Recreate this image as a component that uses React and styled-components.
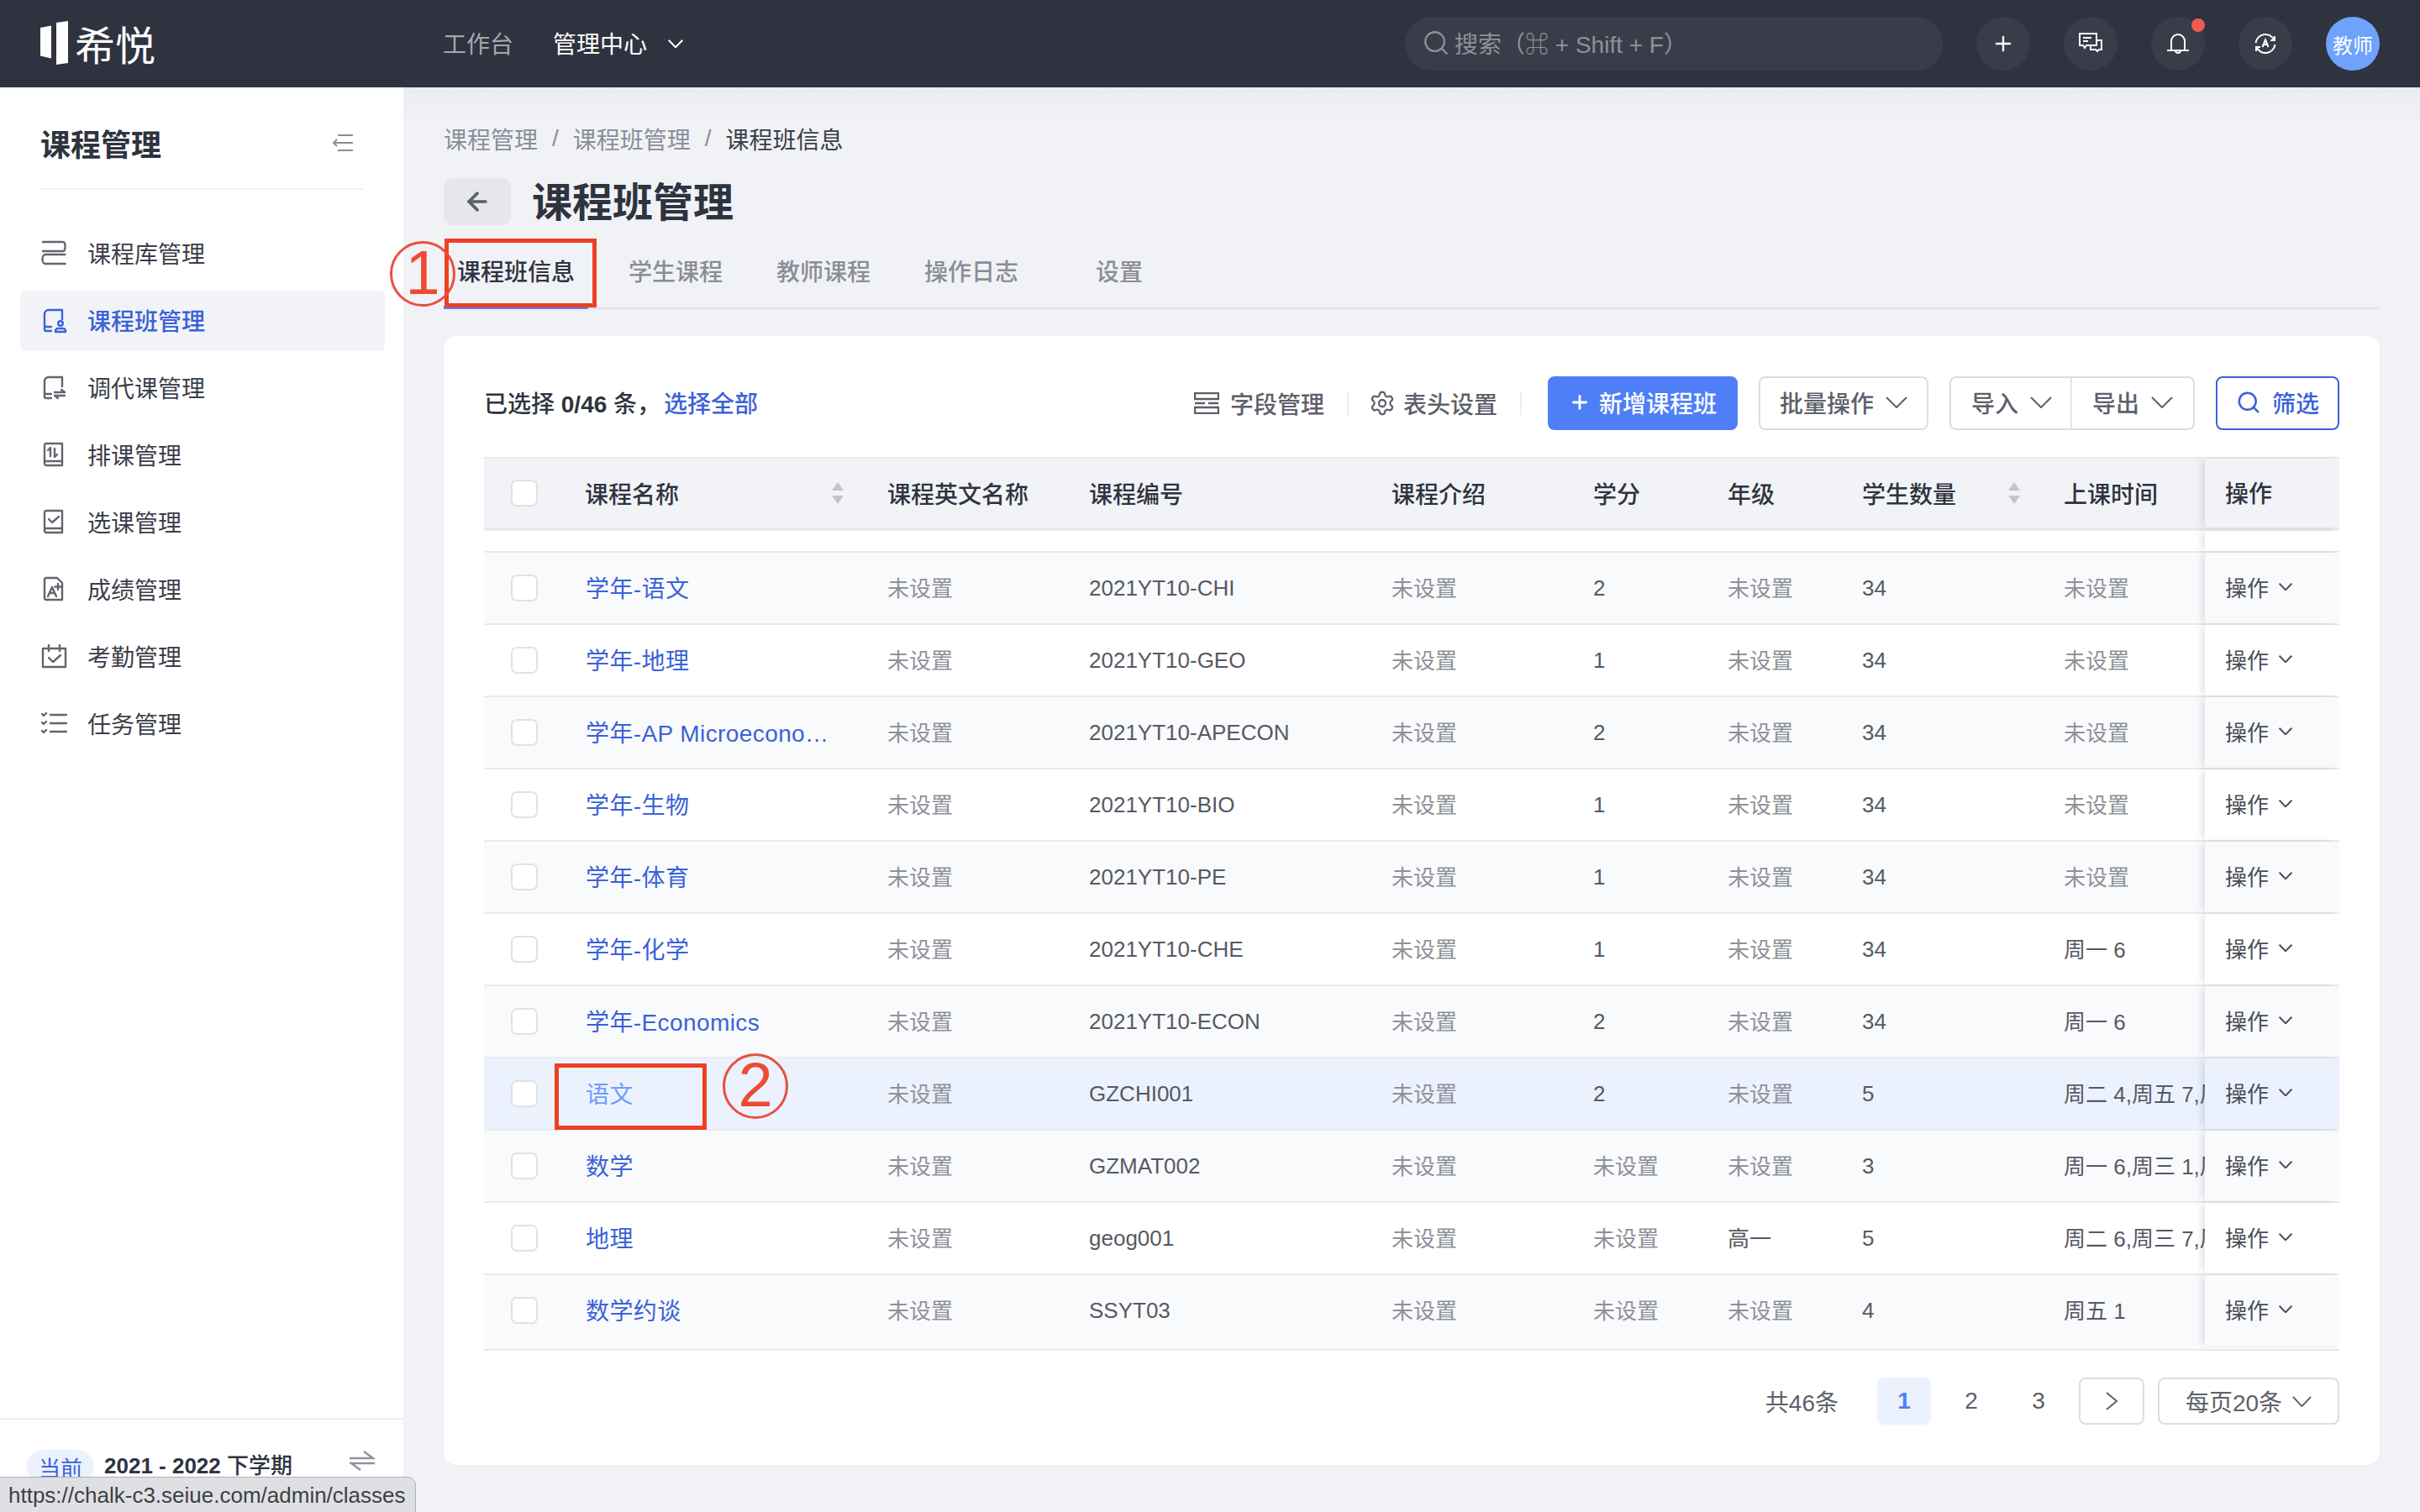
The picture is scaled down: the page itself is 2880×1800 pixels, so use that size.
import styled, { createGlobalStyle } from "styled-components"
import { ArrowLeft, Plus, Search, Settings } from "lucide-react"

const GlobalStyle = createGlobalStyle`
    html, body {
        margin: 0;
        padding: 0;
        background: #f0f2f6;
    }
    * { box-sizing: border-box; }
    body {
        font-family: "Liberation Sans", "Noto Sans CJK SC", sans-serif;
        color: #2f3340;
    }
`

const Page = styled.div`
    position: relative;
    width: 2880px;
    height: 1800px;
    overflow: hidden;
    display: flex;
    flex-direction: column;
`
const TopBar = styled.header`
    height: 104px;
    flex: none;
    background: #2f333f;
    display: flex;
    align-items: center;
    padding: 0 48px;
`
const Logo = styled.div`
    display: flex;
    align-items: center;
    gap: 8px;
    width: 479px;
    color: #fff;
    font-size: 48px;
    font-weight: 400;
    padding-bottom: 2px;
`
const TopNav = styled.a`
    font-size: 28px;
    padding-bottom: 2px;
    color: ${(props) => (props.$active ? "#fff" : "#a6a8af")};
    margin-right: ${(props) => (props.$active ? "25px" : "47px")};
`
const TopCaret = styled.span`
    color: #fff;
    display: flex;
`
const TopRight = styled.div`
    margin-left: auto;
    display: flex;
    align-items: center;
    gap: 40px;
`
const SearchBox = styled.div`
    width: 640px;
    height: 64px;
    border-radius: 32px;
    background: #3a3d49;
    display: flex;
    align-items: center;
    gap: 5px;
    padding: 0 0 2px 20px;
    color: #8f9199;
    font-size: 28px;
`
const RoundButton = styled.div`
    position: relative;
    width: 64px;
    height: 64px;
    border-radius: 50%;
    background: #3a3d49;
    color: #fff;
    display: flex;
    align-items: center;
    justify-content: center;
`
const RedDot = styled.span`
    position: absolute;
    top: 2px;
    right: 0;
    width: 16px;
    height: 16px;
    border-radius: 50%;
    background: #ef5a55;
`
const Avatar = styled.div`
    width: 64px;
    height: 64px;
    border-radius: 50%;
    background: #6ea2fb;
    color: #fff;
    font-size: 24px;
    display: flex;
    align-items: center;
    justify-content: center;
`
const Body = styled.div`
    flex: 1;
    display: flex;
    min-height: 0;
`
const Sidebar = styled.aside`
    width: 480px;
    flex: none;
    background: #fff;
    display: flex;
    flex-direction: column;
`
const SideHead = styled.div`
    margin: 0 48px;
    height: 122px;
    border-bottom: 2px solid #f0f1f3;
    display: flex;
    align-items: center;
    justify-content: space-between;
    padding: 12px 12px 0 0;
    font-size: 36px;
    font-weight: 700;
    color: #2f3340;
`
const Menu = styled.nav`
    margin-top: 40px;
    padding: 0 22px 0 24px;
    display: flex;
    flex-direction: column;
    gap: 8px;
`
const MenuItem = styled.a`
    height: 72px;
    display: flex;
    align-items: center;
    gap: 24px;
    padding: 0 0 2px 24px;
    border-radius: 6px;
    font-size: 28px;
    color: ${(props) => (props.$active ? "#3a62d8" : "#3b3e49")};
    background: ${(props) => (props.$active ? "#f2f3f7" : "transparent")};
    font-weight: ${(props) => (props.$active ? 500 : 400)};
    svg { color: ${(props) => (props.$active ? "#3a62d8" : "#63656e")}; }
`
const SideFoot = styled.div`
    margin-top: auto;
    height: 112px;
    border-top: 2px solid #eeeff1;
    display: flex;
    align-items: flex-start;
    padding: 36px 32px 0;
    font-size: 26px;
    font-weight: 500;
    color: #2f3340;
`
const TermTag = styled.span`
    width: 80px;
    height: 40px;
    border-radius: 20px;
    background: #ebf1fd;
    color: #3a62d8;
    font-weight: 400;
    display: flex;
    align-items: center;
    justify-content: center;
    margin-right: 12px;
`
const TermName = styled.span`
    line-height: 38px;
    flex: 1;
`
const Num = styled.b`
    font-weight: 700;
`
const StatusBar = styled.div`
    position: absolute;
    left: -2px;
    bottom: -2px;
    width: 497px;
    height: 44px;
    background: #dfe0e3;
    border: 1px solid #aeb0b4;
    border-top-right-radius: 10px;
    font-size: 26px;
    line-height: 42px;
    padding-left: 11px;
    color: #3d3f45;
    white-space: nowrap;
`
const Main = styled.main`
    flex: 1;
    min-width: 0;
    padding: 41px 48px 0;
    background: linear-gradient(#eaebef, #f0f2f6 40px);
`
const Crumbs = styled.div`
    display: flex;
    align-items: center;
    height: 40px;
    font-size: 28px;
    color: #8a8d97;
`
const CrumbSep = styled.span`
    margin: 0 17px;
`
const CrumbNow = styled.span`
    color: #3b3e49;
`
const TitleRow = styled.div`
    margin-top: 27px;
    display: flex;
    align-items: center;
    gap: 25px;
    height: 56px;
`
const BackButton = styled.div`
    width: 80px;
    height: 56px;
    border-radius: 10px;
    background: #e6e7eb;
    color: #5c5f6a;
    display: flex;
    align-items: center;
    justify-content: center;
`
const PageTitle = styled.h1`
    margin: 0 0 6px;
    font-size: 48px;
    font-weight: 700;
    color: #2f3340;
`
const Tabs = styled.div`
    margin-top: 16px;
    height: 84px;
    border-bottom: 2px solid #e1e3e8;
    display: flex;
    gap: 32px;
`
const Tab = styled.a`
    height: 84px;
    padding: 0 16px;
    margin-left: ${(props) => (props.$far ? "28px" : "0")};
    font-size: 28px;
    line-height: 81px;
    color: ${(props) => (props.$active ? "#2f3340" : "#8a8d97")};
    font-weight: 500;
    border-bottom: ${(props) => (props.$active ? "4px solid #4f7ff6" : "none")};
`
const Card = styled.section`
    margin-top: 32px;
    height: 1344px;
    background: #fff;
    border-radius: 16px;
    padding: 48px 48px 0;
`
const Toolbar = styled.div`
    height: 64px;
    display: flex;
    align-items: center;
    font-size: 28px;
    font-weight: 500;
`
const SelectInfo = styled.div`
    flex: 1;
    padding-bottom: 2px;
    color: #2f3340;
`
const SelectAll = styled.a`
    margin-left: 4px;
    color: #3a62d8;
`
const ToolLink = styled.a`
    display: flex;
    align-items: center;
    gap: 13px;
    color: #5e6069;
    padding: 0 27px;
    height: 28px;
    border-right: 2px solid #eceded;
    &:first-of-type { padding-left: 0; }
`
const GearIcon = styled(Settings)`
    margin: 0 -4px 0 -3px;
`
const Btn = styled.button`
    height: 64px;
    padding: 0 23px 2px;
    margin-left: ${(props) => (props.$gap ? `${props.$gap}px` : "25px")};
    display: flex;
    align-items: center;
    gap: 14px;
    border-radius: 8px;
    font: inherit;
    background: #fff;
    color: #5e6069;
    border: 2px solid #dcdde0;
`
const PrimaryBtn = styled(Btn)`
    background: #4f7ff6;
    border-color: #4f7ff6;
    color: #fff;
    gap: 10px;
`
const FilterBtn = styled(Btn)`
    padding: 0 22px 2px;
    border-color: #3a62d8;
    color: #3a62d8;
    gap: 13px;
`
const BtnGroup = styled.div`
    display: flex;
    margin-left: 25px;
    ${Btn} {
        margin-left: 0;
        border-radius: 0;
        padding: 0 24px 2px;
    }
    ${Btn}:first-child {
        border-radius: 8px 0 0 8px;
        border-right: none;
        box-shadow: inset -2px 0 0 #e4e5e7;
    }
    ${Btn}:last-child {
        border-radius: 0 8px 8px 0;
        border-left: none;
    }
`
const Table = styled.div`
    margin-top: 32px;
`
const Row = styled.div`
    display: flex;
    height: ${(props) => props.$height || 86}px;
    padding-bottom: ${(props) => (props.$last ? "4px" : "0")};
    border-bottom: 2px solid #e9eaec;
    background: ${(props) => props.$bg || "#fff"};
`
const HeadRow = styled(Row)`
    height: 88px;
    border-top: 2px solid #e9eaec;
    border-bottom: 4px solid #e9eaec;
    background: #f2f3f7;
    font-size: 28px;
    font-weight: 500;
    color: #2f3340;
`
const Cell = styled.div`
    width: ${(props) => props.$w}px;
    flex: none;
    display: flex;
    align-items: center;
    justify-content: ${(props) => (props.$sort ? "space-between" : "flex-start")};
    padding: ${(props) => (props.$sort ? "0 28px 0 24px" : "0 0 0 24px")};
    padding-bottom: ${(props) => (props.$lift ? "3px" : "0")};
    overflow: hidden;
    white-space: nowrap;
    font-size: 26px;
    color: ${(props) => (props.$muted ? "#8e9199" : "#565963")};
    ${HeadRow} & {
        font-size: 28px;
        color: #2f3340;
    }
`
const CheckCell = styled(Cell)`
    padding-left: 32px;
`
const CheckBox = styled.span`
    width: 32px;
    height: 32px;
    border: 2px solid #e1e2e5;
    border-radius: 7px;
    background: #fff;
`
const CourseLink = styled.a`
    font-size: 28px;
    margin: 0 0 3px 1px;
    letter-spacing: 0.4px;
    color: ${(props) => (props.$hover ? "#6f9cff" : "#3a62d8")};
`
const OpsCell = styled(Cell)`
    position: relative;
    gap: 12px;
    padding-bottom: 3px;
    background: inherit;
    box-shadow: -6px 0 8px -2px rgba(30, 35, 50, 0.12);
    color: #4a4d57;
`
const Pager = styled.div`
    margin-top: 32px;
    display: flex;
    align-items: center;
    justify-content: flex-end;
    gap: 16px;
    font-size: 28px;
    color: #5e6069;
`
const PagerTotal = styled.span`
    margin-right: 30px;
`
const PageNum = styled.span`
    width: 64px;
    height: 56px;
    border-radius: 8px;
    display: flex;
    align-items: center;
    justify-content: center;
    background: ${(props) => (props.$on ? "#ebf2fe" : "transparent")};
    color: ${(props) => (props.$on ? "#4f7ff6" : "#5e6069")};
    font-weight: ${(props) => (props.$on ? 700 : 400)};
`
const PagerBox = styled.span`
    height: 56px;
    width: ${(props) => props.$w}px;
    border: 2px solid #dcdde0;
    border-radius: 8px;
    display: flex;
    align-items: center;
    justify-content: center;
    gap: 12px;
`
const MarkBox = styled.div`
    position: absolute;
    left: ${(props) => props.$x}px;
    top: ${(props) => props.$y}px;
    width: ${(props) => props.$w}px;
    height: ${(props) => props.$h}px;
    border: 5px solid #ee3f24;
`
const MarkCircle = styled.div`
    position: absolute;
    left: ${(props) => props.$x}px;
    top: ${(props) => props.$y}px;
    width: 78px;
    height: 78px;
    border: 3px solid #e8503f;
    border-radius: 50%;
    color: #ee4a33;
    font-size: 74px;
    line-height: 70px;
    text-align: center;
`

const Caret = ({ w = 26, h = 14, sw = 2 }) => (
    <svg width={w} height={h} viewBox="0 0 26 14" preserveAspectRatio="none" fill="none" stroke="currentColor" strokeWidth={sw}>
        <path d="M1 1l12 12L25 1" vectorEffect="non-scaling-stroke" />
    </svg>
)

const SortArrows = () => (
    <svg width="14" height="26" viewBox="0 0 14 26" fill="#c3c5ca">
        <path d="M7 0l7 10H0zM7 26l7-10H0z" />
    </svg>
)

const menuPaths = {
    library: <path d="M3 3h24c1.500 0 2.500 2 2.500 5.500S28.500 14 27 14H3M29.500 18H6c-2 0-3.500 2.500-3.500 5.500S4 29 6 29h23.500" />,
    classes: (
        <>
            <path d="M26 15V4H10a5 5 0 0 0-5 5v18a2 2 0 0 0 2 2h6M5 24h8" />
            <circle cx="24" cy="20" r="2.800" />
            <path d="M18 30v-1a3 3 0 0 1 3-3h6a3 3 0 0 1 3 3v1z" />
        </>
    ),
    swap: <path d="M26 15V4H10a5 5 0 0 0-5 5v18a2 2 0 0 0 2 2h6M5 24h8M17 22h12l-4-3M29 26H17l4 3" />,
    sort: <path d="M7 3h19v26H7a2 2 0 0 1-2-2V5a2 2 0 0 1 2-2zM5 24h21M12 18V8l-3 3M17 9v10l3-3" />,
    check: <path d="M7 3h19v26H7a2 2 0 0 1-2-2V5a2 2 0 0 1 2-2zM5 24h21M10 13l4 4 8-7" />,
    grade: <path d="M7 3h13l6 6v20H7a2 2 0 0 1-2-2V5a2 2 0 0 1 2-2zM9 25l5-11 5 11M11 21h6M21 10v7M17.500 13.500h7" />,
    attend: <path d="M3 7h27v22H3zM10 3v7M23 3v7M10 18l5 5 9-8" />,
    tasks: <path d="M2 5l2 2 3-3M2 15l2 2 3-3M2 25l2 2 3-3M12 6h19M12 16h19M12 26h19" />,
}

const MenuIcon = ({ name }) => (
    <svg width="32" height="32" viewBox="0 0 32 32" fill="none" stroke="currentColor" strokeWidth="2.400" strokeLinejoin="round" strokeLinecap="round">
        {menuPaths[name]}
    </svg>
)

const menus = [
    { name: "课程库管理", icon: "library" },
    { name: "课程班管理", icon: "classes", active: true },
    { name: "调代课管理", icon: "swap" },
    { name: "排课管理", icon: "sort" },
    { name: "选课管理", icon: "check" },
    { name: "成绩管理", icon: "grade" },
    { name: "考勤管理", icon: "attend" },
    { name: "任务管理", icon: "tasks" },
]

const UNSET = "未设置"
const rows = [
    ["学年-语文", "2021YT10-CHI", "2", UNSET, "34", UNSET],
    ["学年-地理", "2021YT10-GEO", "1", UNSET, "34", UNSET],
    ["学年-AP Microecono…", "2021YT10-APECON", "2", UNSET, "34", UNSET],
    ["学年-生物", "2021YT10-BIO", "1", UNSET, "34", UNSET],
    ["学年-体育", "2021YT10-PE", "1", UNSET, "34", UNSET],
    ["学年-化学", "2021YT10-CHE", "1", UNSET, "34", "周一 6"],
    ["学年-Economics", "2021YT10-ECON", "2", UNSET, "34", "周一 6"],
    ["语文", "GZCHI001", "2", UNSET, "5", "周二 4,周五 7,周六 3"],
    ["数学", "GZMAT002", UNSET, UNSET, "3", "周一 6,周三 1,周五 2"],
    ["地理", "geog001", UNSET, "高一", "5", "周二 6,周三 7,周五 1"],
    ["数学约谈", "SSYT03", UNSET, UNSET, "4", "周五 1"],
]

const widths = [96, 360, 240, 360, 240, 160, 160, 240, 192, 160]

const rowBg = (i) => {
    if (i === 7) return "#ebf2fe"
    return i % 2 === 0 ? "#f9fafc" : "#fff"
}

function App() {
    return (
        <Page>
            <GlobalStyle />
            <TopBar>
                <Logo>
                    <svg width="33" height="52" viewBox="0 0 33 52" fill="#fff">
                        <path d="M0 8l13-2.500v39L0 41.500zM19 2l14-2 0 50-14 2z" />
                    </svg>
                    希悦
                </Logo>
                <TopNav>工作台</TopNav>
                <TopNav $active>管理中心</TopNav>
                <TopCaret><Caret w={18} h={10} /></TopCaret>
                <TopRight>
                    <SearchBox>
                        <Search size={34} strokeWidth={1.6} />
                        搜索（⌘ + Shift + F）
                    </SearchBox>
                    <RoundButton><Plus size={28} strokeWidth={2} /></RoundButton>
                    <RoundButton>
                        <svg width="28" height="26" viewBox="0 0 28 26" fill="none" stroke="currentColor" strokeWidth="2">
                            <path d="M1 1h20v14H9l-2 3-2-3H1zM5 6h10M5 10h6M21 9h6v11h-3l-2 2-2-2h-6v-5" />
                        </svg>
                    </RoundButton>
                    <RoundButton>
                        <svg width="26" height="28" viewBox="0 0 26 28" fill="none" stroke="currentColor" strokeWidth="2">
                            <path d="M5 22V11a8 8 0 0 1 16 0v11M0 22h26M10 22a3 3 0 0 0 6 0" />
                        </svg>
                        <RedDot />
                    </RoundButton>
                    <RoundButton>
                        <svg width="26" height="26" viewBox="0 0 26 26" fill="none" stroke="currentColor" strokeWidth="2">
                            <path d="M1.500 12a11.500 11.500 0 0 1 22-3M24.500 14a11.500 11.500 0 0 1-22 3M24 4v5h-5M2 22v-5h5M9.500 17L13 8.500l3.500 8.500M10.700 14h4.600" />
                        </svg>
                    </RoundButton>
                    <Avatar>教师</Avatar>
                </TopRight>
            </TopBar>
            <Body>
                <Sidebar>
                    <SideHead>
                        课程管理
                        <svg width="24" height="20" viewBox="0 0 24 20" fill="none" stroke="#8a8d97" strokeWidth="2">
                            <path d="M6 1h18M1 10h23M6 19h18M5 6l-4 4 4 4" />
                        </svg>
                    </SideHead>
                    <Menu>
                        {menus.map((item) => (
                            <MenuItem key={item.name} $active={item.active}>
                                <MenuIcon name={item.icon} />
                                {item.name}
                            </MenuItem>
                        ))}
                    </Menu>
                    <SideFoot>
                        <TermTag>当前</TermTag>
                        <TermName><Num>2021 - 2022</Num> 下学期</TermName>
                        <svg width="30" height="26" viewBox="0 0 30 26" fill="none" stroke="#8f9299" strokeWidth="2.400" style={{ marginRight: 2 }}>
                            <path d="M0 10h28L17 2M30 16H2l11 8" />
                        </svg>
                    </SideFoot>
                </Sidebar>
                <Main>
                    <Crumbs>
                        课程管理<CrumbSep>/</CrumbSep>课程班管理<CrumbSep>/</CrumbSep>
                        <CrumbNow>课程班信息</CrumbNow>
                    </Crumbs>
                    <TitleRow>
                        <BackButton><ArrowLeft size={34} strokeWidth={2.6} /></BackButton>
                        <PageTitle>课程班管理</PageTitle>
                    </TitleRow>
                    <Tabs>
                        <Tab $active>课程班信息</Tab>
                        <Tab>学生课程</Tab>
                        <Tab>教师课程</Tab>
                        <Tab>操作日志</Tab>
                        <Tab $far>设置</Tab>
                    </Tabs>
                    <Card>
                        <Toolbar>
                            <SelectInfo>
                                已选择 <Num>0/46</Num> 条，<SelectAll>选择全部</SelectAll>
                            </SelectInfo>
                            <ToolLink>
                                <svg width="30" height="26" viewBox="0 0 30 26" fill="none" stroke="currentColor" strokeWidth="2.400">
                                    <path d="M1 1h28v7H1zM1 13h12M17 13h12M1 18h28v7H1z" />
                                </svg>
                                字段管理
                            </ToolLink>
                            <ToolLink>
                                <GearIcon size={32} strokeWidth={1.7} />
                                表头设置
                            </ToolLink>
                            <PrimaryBtn $gap={31}><Plus size={26} strokeWidth={2.6} />新增课程班</PrimaryBtn>
                            <Btn>批量操作<Caret /></Btn>
                            <BtnGroup>
                                <Btn>导入<Caret /></Btn>
                                <Btn>导出<Caret /></Btn>
                            </BtnGroup>
                            <FilterBtn><Search size={30} strokeWidth={2} />筛选</FilterBtn>
                        </Toolbar>
                        <Table>
                            <HeadRow>
                                <CheckCell $w={widths[0]}><CheckBox /></CheckCell>
                                <Cell $w={widths[1]} $sort>课程名称<SortArrows /></Cell>
                                <Cell $w={widths[2]}>课程英文名称</Cell>
                                <Cell $w={widths[3]}>课程编号</Cell>
                                <Cell $w={widths[4]}>课程介绍</Cell>
                                <Cell $w={widths[5]}>学分</Cell>
                                <Cell $w={widths[6]}>年级</Cell>
                                <Cell $w={widths[7]} $sort>学生数量<SortArrows /></Cell>
                                <Cell $w={widths[8]}>上课时间</Cell>
                                <OpsCell $w={widths[9]}>操作</OpsCell>
                            </HeadRow>
                            <Row $height={26}>
                                <Cell $w={widths.slice(0, 9).reduce((a, b) => a + b, 0)} />
                                <OpsCell $w={widths[9]} />
                            </Row>
                            {rows.map((row, i) => (
                                <Row key={row[1]} $bg={rowBg(i)} $last={i === rows.length - 1} $height={i === rows.length - 1 ? 90 : 86}>
                                    <CheckCell $w={widths[0]}><CheckBox /></CheckCell>
                                    <Cell $w={widths[1]}><CourseLink $hover={i === 7}>{row[0]}</CourseLink></Cell>
                                    <Cell $w={widths[2]} $muted $lift>{UNSET}</Cell>
                                    <Cell $w={widths[3]}>{row[1]}</Cell>
                                    <Cell $w={widths[4]} $muted $lift>{UNSET}</Cell>
                                    <Cell $w={widths[5]} $muted={row[2] === UNSET} $lift={row[2] === UNSET}>{row[2]}</Cell>
                                    <Cell $w={widths[6]} $muted={row[3] === UNSET} $lift>{row[3]}</Cell>
                                    <Cell $w={widths[7]}>{row[4]}</Cell>
                                    <Cell $w={widths[8]} $muted={row[5] === UNSET} $lift>{row[5]}</Cell>
                                    <OpsCell $w={widths[9]}>操作<Caret w={16} h={9} /></OpsCell>
                                </Row>
                            ))}
                        </Table>
                        <Pager>
                            <PagerTotal>共46条</PagerTotal>
                            <PageNum $on>1</PageNum>
                            <PageNum>2</PageNum>
                            <PageNum>3</PageNum>
                            <PagerBox $w={78}>
                                <svg width="14" height="22" viewBox="0 0 14 22" fill="none" stroke="currentColor" strokeWidth="2">
                                    <path d="M1 1l12 10L1 21" />
                                </svg>
                            </PagerBox>
                            <PagerBox $w={216}>每页20条<Caret w={23} h={13} /></PagerBox>
                        </Pager>
                    </Card>
                </Main>
            </Body>
            <StatusBar>https://chalk-c3.seiue.com/admin/classes</StatusBar>
            <MarkBox $x={529} $y={284} $w={181} $h={82} />
            <MarkCircle $x={464} $y={287}>1</MarkCircle>
            <MarkBox $x={660} $y={1266} $w={181} $h={79} />
            <MarkCircle $x={860} $y={1254}>2</MarkCircle>
        </Page>
    )
}

export default App
